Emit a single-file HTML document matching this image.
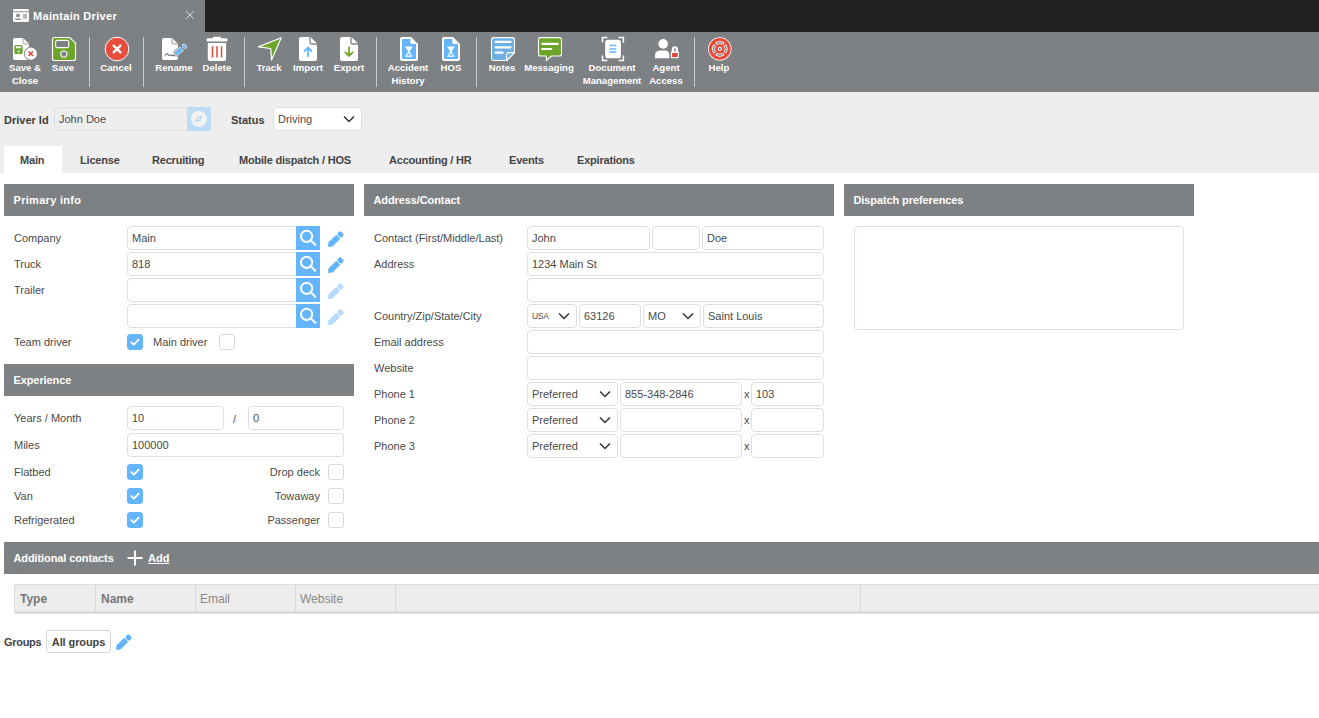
<!DOCTYPE html>
<html><head><meta charset="utf-8">
<style>
*{box-sizing:border-box;margin:0;padding:0}
html,body{width:1319px;height:718px;overflow:hidden;background:#fff;font-family:"Liberation Sans",sans-serif;font-size:11px;color:#444}
.a{position:absolute}
#titlebar{left:0;top:0;width:1319px;height:32px;background:#222}
#tab0{left:0;top:0;width:205px;height:32px;background:#7e8184}
#toolbar{left:0;top:32px;width:1319px;height:60px;background:#7e8184}
#topbg{left:0;top:92px;width:1319px;height:81px;background:#eee}
.sep{position:absolute;top:37px;width:1px;height:50px;background:#c9cbcd}
.tl{position:absolute;top:60.5px;color:#fff;font-weight:bold;font-size:9.6px;line-height:13px;text-align:center;white-space:nowrap;letter-spacing:0px}
.tl span{display:block}
.hdr{position:absolute;height:32px;background:#7e8184;color:#fff;font-weight:bold;font-size:11px;line-height:32px;padding-left:9.5px;letter-spacing:-0.1px}
.lbl{position:absolute;font-size:11px;line-height:14px;color:#4a4a4a;white-space:nowrap}
.inp{position:absolute;height:24px;border:1px solid #dcdee3;border-radius:4px;background:#fff;font-size:11px;line-height:22px;padding-left:4px;color:#4a4a4a;white-space:nowrap}
.srch{position:absolute;width:24px;height:24px;background:#64b5fb}
.cb{position:absolute;width:16px;height:16px;border-radius:3px;border:1px solid #d6d8dc;background:#fff}
.cb.on{background:#64b5fb;border-color:#64b5fb}
.tab{position:absolute;top:147px;height:27px;font-weight:bold;font-size:11px;line-height:27px;color:#444;white-space:nowrap;letter-spacing:-0.2px}
.sel svg{position:absolute;right:6px;top:7px}
</style></head>
<body>
<div class="a" id="titlebar"></div>
<div class="a" id="tab0"></div>
<div class="a" id="toolbar"></div>
<div class="a" id="topbg"></div>

<svg class="a" style="left:0;top:0" width="760" height="92" viewBox="0 0 760 92">
<!-- title id card -->
<rect x="13" y="9" width="16" height="13" rx="1.5" fill="#fff"/>
<rect x="13" y="11.3" width="16" height="0.9" fill="#7e8184"/>
<circle cx="18" cy="15.4" r="1.9" fill="#8a8c8f"/>
<rect x="15" y="18.6" width="6" height="1.4" rx="0.7" fill="#8a8c8f"/>
<rect x="23" y="14" width="4" height="4.7" fill="#b5b6b8"/>
<!-- close x -->
<path d="M186 11 L194 19 M194 11 L186 19" stroke="#d8d9da" stroke-width="1"/>
<!-- save & close -->
<path d="M15 38 H23 L29 44 V58 Q29 60 27 60 H15 Q13 60 13 58 V40 Q13 38 15 38 Z" fill="#fff"/>
<path d="M23 38 V43 Q23 44 24 44 H29" fill="#eee" stroke="#999" stroke-width="0.8"/>
<rect x="14.3" y="45" width="8.4" height="9" rx="1.6" fill="#6da52b"/>
<rect x="15.8" y="46.3" width="5.4" height="2" rx="0.6" fill="#fff"/>
<circle cx="18.5" cy="51.6" r="1" fill="#fff"/>
<circle cx="30.8" cy="53.7" r="6.9" fill="#7e8184"/>
<circle cx="30.8" cy="53.7" r="6.1" fill="#fff"/>
<path d="M28.6 51.5 L33 55.9 M33 51.5 L28.6 55.9" stroke="#e2483a" stroke-width="1.5"/>
<!-- save -->
<path d="M54.5 37.5 H69.8 L75.5 43.2 V58.5 Q75.5 60.5 73.5 60.5 H54.5 Q52.5 60.5 52.5 58.5 V39.5 Q52.5 37.5 54.5 37.5 Z" fill="#6da52b" stroke="#fff" stroke-width="1.2"/>
<rect x="55.6" y="40.4" width="13.2" height="7.2" rx="1.8" fill="#7e8184" stroke="#fff" stroke-width="1.1"/>
<circle cx="63.9" cy="54.1" r="3.1" fill="#7e8184" stroke="#fff" stroke-width="1.1"/>
<!-- cancel -->
<circle cx="117" cy="49" r="11.8" fill="#e74c3c" stroke="#fff" stroke-width="1"/>
<path d="M113.6 45.6 L120.4 52.4 M120.4 45.6 L113.6 52.4" stroke="#fff" stroke-width="2.3" stroke-linecap="round"/>
<!-- rename -->
<path d="M164 38 H172 L178 44 V58 Q178 60 176 60 H164 Q162 60 162 58 V40 Q162 38 164 38 Z" fill="#fff"/>
<path d="M172 38 V43 Q172 44 173 44 H178" fill="#eee" stroke="#888" stroke-width="0.8"/>
<path d="M165 56.2 Q166.3 53.2 167.6 53.6 Q168.6 56.4 170 55.2 Q171 54 172 55.6 L174.5 55.6" fill="none" stroke="#6d6f72" stroke-width="1.1"/>
<g transform="translate(174.4 55.2) rotate(-42)">
<path d="M-0.3 0.3 L2 -3 H10.6 V3 H2 Z" fill="#fff" stroke="#7e8184" stroke-width="0.9" stroke-linejoin="round"/>
<path d="M0.9 0 L2.6 -2 H10 V2 H2.6 Z" fill="#64b5fb"/>
<rect x="11.3" y="-3" width="4.3" height="6" rx="2.3" fill="#fff" stroke="#7e8184" stroke-width="0.6"/>
<rect x="12.1" y="-2" width="2.7" height="4" rx="1.3" fill="#64b5fb"/>
</g>
<!-- delete -->
<rect x="206.5" y="38.3" width="21" height="3.3" rx="1.5" fill="#fff"/>
<rect x="212.8" y="36.8" width="8.2" height="2.5" rx="1" fill="#fff"/>
<path d="M207.8 42.9 H226.1 V58.5 Q226.1 61 223.6 61 H210.3 Q207.8 61 207.8 58.5 Z" fill="#fff"/>
<path d="M212.5 46.3 V57.6 M217 46.3 V57.6 M221.5 46.3 V57.6" stroke="#e2483a" stroke-width="1.5"/>
<!-- track -->
<path d="M281.2 37.8 L258.5 46.9 L270.7 48.5 L271.6 60.1 Z" fill="#6da52b" stroke="#fff" stroke-width="1.2" stroke-linejoin="round"/>
<!-- import -->
<path d="M301 37 H310 L317 44 V59 Q317 61 315 61 H301 Q299 61 299 59 V39 Q299 37 301 37 Z" fill="#fff"/>
<path d="M310 36.5 V42.5 Q310 44 311.5 44 H317.5" fill="#fff" stroke="#7e8184" stroke-width="1.3"/>
<path d="M308 56 V47.8 M304.4 51.2 L308 47.6 L311.6 51.2" fill="none" stroke="#64b5fb" stroke-width="1.8" stroke-linecap="round"/>
<!-- export -->
<path d="M342 37 H351 L358 44 V59 Q358 61 356 61 H342 Q340 61 340 59 V39 Q340 37 342 37 Z" fill="#fff"/>
<path d="M351 36.5 V42.5 Q351 44 352.5 44 H358.5" fill="#fff" stroke="#7e8184" stroke-width="1.3"/>
<path d="M349 47.3 V56 M345.4 52.3 L349 55.9 L352.6 52.3" fill="none" stroke="#6da52b" stroke-width="1.8" stroke-linecap="round"/>
<!-- accident history -->
<path d="M402 37 H411 L418 44 V59 Q418 61 416 61 H402 Q400 61 400 59 V39 Q400 37 402 37 Z" fill="#fff"/>
<path d="M403 39 H410.4 V43 Q410.4 44 411.4 44 H416 V58 Q416 59 415 59 H403 Q402 59 402 58 V40 Q402 39 403 39 Z" fill="#64b5fb"/>
<path d="M404.9 46.5 H412.8 L409.5 51.6 L412.8 56.8 H404.9 L408.2 51.6 Z" fill="#fff"/>
<path d="M406.3 55.6 L408.85 53.2 L411.4 55.6 Z" fill="#64b5fb"/>
<!-- hos -->
<path d="M444 37 H453 L460 44 V59 Q460 61 458 61 H444 Q442 61 442 59 V39 Q442 37 444 37 Z" fill="#fff"/>
<path d="M445 39 H452.4 V43 Q452.4 44 453.4 44 H458 V58 Q458 59 457 59 H445 Q444 59 444 58 V40 Q444 39 445 39 Z" fill="#64b5fb"/>
<path d="M446.9 46.5 H454.8 L451.5 51.6 L454.8 56.8 H446.9 L450.2 51.6 Z" fill="#fff"/>
<path d="M448.3 55.6 L450.85 53.2 L453.4 55.6 Z" fill="#64b5fb"/>
<!-- notes -->
<path d="M494 37.6 H512 Q514.5 37.6 514.5 40.1 V52.6 L506.6 60.5 H494 Q491.5 60.5 491.5 58 V40.1 Q491.5 37.6 494 37.6 Z" fill="#6eafe4" stroke="#fff" stroke-width="1.1"/>
<path d="M506.6 60.5 V55 Q506.6 52.6 509 52.6 H514.5 Z" fill="#6eafe4" stroke="#fff" stroke-width="1.1" stroke-linejoin="round"/>
<path d="M495.6 41.9 H510.6 M495.6 47.3 H510.6 M495.6 52.7 H502.6" stroke="#fff" stroke-width="2.2" stroke-linecap="round"/>
<!-- messaging -->
<path d="M540.5 37.6 H559.5 Q561.5 37.6 561.5 39.6 V54 Q561.5 56 559.5 56 H551.5 L546.3 60.5 V56 H540.5 Q538.5 56 538.5 54 V39.6 Q538.5 37.6 540.5 37.6 Z" fill="#6da52b" stroke="#fff" stroke-width="1.1" stroke-linejoin="round"/>
<path d="M542.3 43.8 H557.8 M542.3 49 H551.2" stroke="#fff" stroke-width="2.2" stroke-linecap="round"/>
<!-- document management -->
<path d="M602.5 42.5 V37.6 H607.4 M618.6 37.6 H623.4 V42.5 M623.4 55.5 V60.4 H618.6 M607.4 60.4 H602.5 V55.5" fill="none" stroke="#fff" stroke-width="1.5"/>
<rect x="605.2" y="39.8" width="15.7" height="18.5" rx="2.6" fill="#fff"/>
<path d="M609.3 45.6 H616.3 M609.3 48.9 H616.3 M609.3 52.1 H616.3" stroke="#64b5fb" stroke-width="1.5"/>
<!-- agent access -->
<circle cx="663.2" cy="43.9" r="4.8" fill="#fff"/>
<path d="M655 58.3 V55.5 Q655 50.4 660.5 50.4 H665 Q669.3 50.4 669.3 55 V58.3 Z" fill="#fff"/>
<path d="M671.8 52.5 V49.6 Q671.8 46.3 674.9 46.3 Q678 46.3 678 49.6 V52.5 Z" fill="#fff"/>
<rect x="674.1" y="48.3" width="1.6" height="3.5" rx="0.8" fill="#7e8184"/>
<rect x="670.9" y="51.6" width="8" height="6.7" rx="1" fill="#fff"/>
<rect x="672.1" y="52.9" width="5.6" height="4.1" fill="#e2483a"/>
<!-- help -->
<circle cx="719.8" cy="48.9" r="11.7" fill="#fff"/>
<circle cx="719.8" cy="48.9" r="10.9" fill="#e84a3a"/>
<path d="M726.02 44.71 A7.5 7.5 0 0 1 726.02 53.09 L724.19 51.86 A5.3 5.3 0 0 0 724.19 45.94 Z" fill="#7e8184" stroke="#fff" stroke-width="0.9" stroke-linejoin="round"/>
<path d="M723.99 55.12 A7.5 7.5 0 0 1 715.61 55.12 L716.84 53.29 A5.3 5.3 0 0 0 722.76 53.29 Z" fill="#7e8184" stroke="#fff" stroke-width="0.9" stroke-linejoin="round"/>
<path d="M713.58 53.09 A7.5 7.5 0 0 1 713.58 44.71 L715.41 45.94 A5.3 5.3 0 0 0 715.41 51.86 Z" fill="#7e8184" stroke="#fff" stroke-width="0.9" stroke-linejoin="round"/>
<path d="M715.61 42.68 A7.5 7.5 0 0 1 723.99 42.68 L722.76 44.51 A5.3 5.3 0 0 0 716.84 44.51 Z" fill="#7e8184" stroke="#fff" stroke-width="0.9" stroke-linejoin="round"/>
<circle cx="719.8" cy="48.9" r="2.1" fill="#fff"/>
<circle cx="719.8" cy="48.9" r="1.1" fill="#7e8184"/>
</svg>
<!-- title -->
<div class="a" style="left:33px;top:9px;color:#fff;font-weight:bold;font-size:11px;line-height:14px;letter-spacing:0.3px">Maintain Driver</div>

<!-- separators -->
<div class="sep" style="left:89px"></div>
<div class="sep" style="left:143px"></div>
<div class="sep" style="left:244px"></div>
<div class="sep" style="left:376px"></div>
<div class="sep" style="left:476px"></div>
<div class="sep" style="left:694px"></div>

<!-- toolbar labels -->
<div class="tl" style="left:5px;width:40px"><span>Save &amp;</span><span>Close</span></div>
<div class="tl" style="left:43px;width:40px">Save</div>
<div class="tl" style="left:96px;width:40px">Cancel</div>
<div class="tl" style="left:152px;width:44px">Rename</div>
<div class="tl" style="left:197px;width:40px">Delete</div>
<div class="tl" style="left:249px;width:40px">Track</div>
<div class="tl" style="left:288px;width:40px">Import</div>
<div class="tl" style="left:329px;width:40px">Export</div>
<div class="tl" style="left:383px;width:50px"><span>Accident</span><span>History</span></div>
<div class="tl" style="left:431px;width:40px">HOS</div>
<div class="tl" style="left:482px;width:40px">Notes</div>
<div class="tl" style="left:522px;width:54px">Messaging</div>
<div class="tl" style="left:577px;width:70px"><span>Document</span><span>Management</span></div>
<div class="tl" style="left:641px;width:50px"><span>Agent</span><span>Access</span></div>
<div class="tl" style="left:699px;width:40px">Help</div>

<!-- driver id row -->
<div class="lbl" style="left:4px;top:113px;font-weight:bold;color:#3d3d3d">Driver Id</div>
<div class="inp" style="left:54px;top:107px;width:157px;height:24px;background:#eeeeee;border-color:#dde0e5">John Doe</div>
<div class="a" style="left:187px;top:107px;width:24px;height:24px;background:#bcdcf6"></div>
<svg class="a" style="left:187px;top:107px" width="24" height="24" viewBox="0 0 24 24"><circle cx="12" cy="12" r="8" fill="#f2f2f2"/><path d="M15.9 8.2 L13.4 13.6 L7.6 15.7 L10.1 10.3 Z" fill="#bcdcf5"/><rect x="10.9" y="11.1" width="1.8" height="1.8" fill="#f2f2f2"/></svg>
<div class="lbl" style="left:231px;top:113px;font-weight:bold;color:#3d3d3d">Status</div>
<div class="inp sel" style="left:273px;top:107px;width:89px;height:24px">Driving<svg width="12" height="8" viewBox="0 0 12 8"><path d="M1 1.5 L6 6.5 L11 1.5" fill="none" stroke="#333" stroke-width="1.5"/></svg></div>

<!-- tabs -->
<div class="a" style="left:4px;top:146px;width:58px;height:27px;background:#fff"></div>
<div class="tab" style="left:20px">Main</div>
<div class="tab" style="left:80px">License</div>
<div class="tab" style="left:152px">Recruiting</div>
<div class="tab" style="left:239px">Mobile dispatch / HOS</div>
<div class="tab" style="left:389px">Accounting / HR</div>
<div class="tab" style="left:509px">Events</div>
<div class="tab" style="left:577px">Expirations</div>

<!-- headers -->
<div class="hdr" style="left:4px;top:184px;width:350px;letter-spacing:0.3px">Primary info</div>
<div class="hdr" style="left:364px;top:184px;width:470px">Address/Contact</div>
<div class="hdr" style="left:844px;top:184px;width:350px">Dispatch preferences</div>
<div class="hdr" style="left:4px;top:364px;width:350px">Experience</div>
<div class="hdr" style="left:4px;top:542px;width:1315px">Additional contacts</div>

<!-- primary info -->
<div class="lbl" style="left:14px;top:231px">Company</div>
<div class="inp" style="left:127px;top:226px;width:180px;height:24px">Main</div>
<div class="srch" style="left:296px;top:226px"><svg width="24" height="24" viewBox="0 0 24 24"><circle cx="10.6" cy="10.3" r="5.6" fill="none" stroke="#fff" stroke-width="2"/><path d="M14.7 14.3 L19.3 18.7" stroke="#fff" stroke-width="2" stroke-linecap="round"/></svg></div>
<svg class="a" style="left:324px;top:226px" width="24" height="24" viewBox="0 0 24 24"><g transform="translate(4.2 20.8) rotate(-45)" fill="#62b2f6" stroke="#62b2f6" stroke-linejoin="round"><path d="M0.4 0 L3.6 -2.55 H13.9 V2.55 H3.6 Z" stroke-width="0.8"/><rect x="15.1" y="-2.7" width="4.6" height="5.4" rx="2.3" stroke-width="0.8"/></g></svg>
<div class="lbl" style="left:14px;top:257px">Truck</div>
<div class="inp" style="left:127px;top:252px;width:180px;height:24px">818</div>
<div class="srch" style="left:296px;top:252px"><svg width="24" height="24" viewBox="0 0 24 24"><circle cx="10.6" cy="10.3" r="5.6" fill="none" stroke="#fff" stroke-width="2"/><path d="M14.7 14.3 L19.3 18.7" stroke="#fff" stroke-width="2" stroke-linecap="round"/></svg></div>
<svg class="a" style="left:324px;top:252px" width="24" height="24" viewBox="0 0 24 24"><g transform="translate(4.2 20.8) rotate(-45)" fill="#62b2f6" stroke="#62b2f6" stroke-linejoin="round"><path d="M0.4 0 L3.6 -2.55 H13.9 V2.55 H3.6 Z" stroke-width="0.8"/><rect x="15.1" y="-2.7" width="4.6" height="5.4" rx="2.3" stroke-width="0.8"/></g></svg>
<div class="lbl" style="left:14px;top:283px">Trailer</div>
<div class="inp" style="left:127px;top:278px;width:180px;height:24px"></div>
<div class="srch" style="left:296px;top:278px"><svg width="24" height="24" viewBox="0 0 24 24"><circle cx="10.6" cy="10.3" r="5.6" fill="none" stroke="#fff" stroke-width="2"/><path d="M14.7 14.3 L19.3 18.7" stroke="#fff" stroke-width="2" stroke-linecap="round"/></svg></div>
<svg class="a" style="left:324px;top:278px" width="24" height="24" viewBox="0 0 24 24"><g transform="translate(4.2 20.8) rotate(-45)" fill="#b5dafb" stroke="#b5dafb" stroke-linejoin="round"><path d="M0.4 0 L3.6 -2.55 H13.9 V2.55 H3.6 Z" stroke-width="0.8"/><rect x="15.1" y="-2.7" width="4.6" height="5.4" rx="2.3" stroke-width="0.8"/></g></svg>
<div class="inp" style="left:127px;top:304px;width:180px;height:24px"></div>
<div class="srch" style="left:296px;top:304px"><svg width="24" height="24" viewBox="0 0 24 24"><circle cx="10.6" cy="10.3" r="5.6" fill="none" stroke="#fff" stroke-width="2"/><path d="M14.7 14.3 L19.3 18.7" stroke="#fff" stroke-width="2" stroke-linecap="round"/></svg></div>
<svg class="a" style="left:324px;top:304px" width="24" height="24" viewBox="0 0 24 24"><g transform="translate(4.2 20.8) rotate(-45)" fill="#b5dafb" stroke="#b5dafb" stroke-linejoin="round"><path d="M0.4 0 L3.6 -2.55 H13.9 V2.55 H3.6 Z" stroke-width="0.8"/><rect x="15.1" y="-2.7" width="4.6" height="5.4" rx="2.3" stroke-width="0.8"/></g></svg>
<div class="lbl" style="left:14px;top:335px">Team driver</div>
<div class="cb on" style="left:127px;top:334px"><svg width="16" height="16" viewBox="0 0 16 16" style="position:absolute;left:-1px;top:-1px"><path d="M4.3 8.2 L6.8 10.6 L11.6 5.6" fill="none" stroke="#fff" stroke-width="1.8" stroke-linecap="round" stroke-linejoin="round"/></svg></div>
<div class="lbl" style="left:153px;top:335px">Main driver</div>
<div class="cb" style="left:219px;top:334px"></div>
<!-- experience -->
<div class="lbl" style="left:14px;top:411px">Years / Month</div>
<div class="inp" style="left:127px;top:406px;width:97px;height:24px">10</div>
<div class="lbl" style="left:233px;top:412px">/</div>
<div class="inp" style="left:248px;top:406px;width:96px;height:24px">0</div>
<div class="lbl" style="left:14px;top:438px">Miles</div>
<div class="inp" style="left:127px;top:433px;width:217px;height:24px">100000</div>
<div class="lbl" style="left:14px;top:465px">Flatbed</div>
<div class="cb on" style="left:127px;top:464px"><svg width="16" height="16" viewBox="0 0 16 16" style="position:absolute;left:-1px;top:-1px"><path d="M4.3 8.2 L6.8 10.6 L11.6 5.6" fill="none" stroke="#fff" stroke-width="1.8" stroke-linecap="round" stroke-linejoin="round"/></svg></div>
<div class="lbl" style="right:999px;top:465px">Drop deck</div>
<div class="cb" style="left:328px;top:464px"></div>
<div class="lbl" style="left:14px;top:489px">Van</div>
<div class="cb on" style="left:127px;top:488px"><svg width="16" height="16" viewBox="0 0 16 16" style="position:absolute;left:-1px;top:-1px"><path d="M4.3 8.2 L6.8 10.6 L11.6 5.6" fill="none" stroke="#fff" stroke-width="1.8" stroke-linecap="round" stroke-linejoin="round"/></svg></div>
<div class="lbl" style="right:999px;top:489px">Towaway</div>
<div class="cb" style="left:328px;top:488px"></div>
<div class="lbl" style="left:14px;top:513px">Refrigerated</div>
<div class="cb on" style="left:127px;top:512px"><svg width="16" height="16" viewBox="0 0 16 16" style="position:absolute;left:-1px;top:-1px"><path d="M4.3 8.2 L6.8 10.6 L11.6 5.6" fill="none" stroke="#fff" stroke-width="1.8" stroke-linecap="round" stroke-linejoin="round"/></svg></div>
<div class="lbl" style="right:999px;top:513px">Passenger</div>
<div class="cb" style="left:328px;top:512px"></div>
<!-- address -->
<div class="lbl" style="left:374px;top:231px">Contact (First/Middle/Last)</div>
<div class="inp" style="left:527px;top:226px;width:123px;height:24px">John</div>
<div class="inp" style="left:652px;top:226px;width:48px;height:24px"></div>
<div class="inp" style="left:702px;top:226px;width:122px;height:24px">Doe</div>
<div class="lbl" style="left:374px;top:257px">Address</div>
<div class="inp" style="left:527px;top:252px;width:297px;height:24px">1234 Main St</div>
<div class="inp" style="left:527px;top:278px;width:297px;height:24px"></div>
<div class="lbl" style="left:374px;top:309px">Country/Zip/State/City</div>
<div class="inp sel" style="left:527px;top:304px;width:50px"><span style="font-size:8.5px;letter-spacing:-0.3px;position:relative;top:-1px">USA</span><svg width="12" height="8" viewBox="0 0 12 8"><path d="M1 1.5 L6 6.5 L11 1.5" fill="none" stroke="#333" stroke-width="1.5"/></svg></div>
<div class="inp" style="left:579px;top:304px;width:62px;height:24px">63126</div>
<div class="inp sel" style="left:643px;top:304px;width:58px">MO<svg width="12" height="8" viewBox="0 0 12 8"><path d="M1 1.5 L6 6.5 L11 1.5" fill="none" stroke="#333" stroke-width="1.5"/></svg></div>
<div class="inp" style="left:703px;top:304px;width:121px;height:24px">Saint Louis</div>
<div class="lbl" style="left:374px;top:335px">Email address</div>
<div class="inp" style="left:527px;top:330px;width:297px;height:24px"></div>
<div class="lbl" style="left:374px;top:361px">Website</div>
<div class="inp" style="left:527px;top:356px;width:297px;height:24px"></div>
<div class="lbl" style="left:374px;top:387px">Phone 1</div>
<div class="inp sel" style="left:527px;top:382px;width:91px">Preferred<svg width="12" height="8" viewBox="0 0 12 8"><path d="M1 1.5 L6 6.5 L11 1.5" fill="none" stroke="#333" stroke-width="1.5"/></svg></div>
<div class="inp" style="left:620px;top:382px;width:122px;height:24px">855-348-2846</div>
<div class="lbl" style="left:744px;top:387px">x</div>
<div class="inp" style="left:751px;top:382px;width:73px;height:24px">103</div>
<div class="lbl" style="left:374px;top:413px">Phone 2</div>
<div class="inp sel" style="left:527px;top:408px;width:91px">Preferred<svg width="12" height="8" viewBox="0 0 12 8"><path d="M1 1.5 L6 6.5 L11 1.5" fill="none" stroke="#333" stroke-width="1.5"/></svg></div>
<div class="inp" style="left:620px;top:408px;width:122px;height:24px"></div>
<div class="lbl" style="left:744px;top:413px">x</div>
<div class="inp" style="left:751px;top:408px;width:73px;height:24px"></div>
<div class="lbl" style="left:374px;top:439px">Phone 3</div>
<div class="inp sel" style="left:527px;top:434px;width:91px">Preferred<svg width="12" height="8" viewBox="0 0 12 8"><path d="M1 1.5 L6 6.5 L11 1.5" fill="none" stroke="#333" stroke-width="1.5"/></svg></div>
<div class="inp" style="left:620px;top:434px;width:122px;height:24px"></div>
<div class="lbl" style="left:744px;top:439px">x</div>
<div class="inp" style="left:751px;top:434px;width:73px;height:24px"></div>
<!-- dispatch -->
<div class="a" style="left:854px;top:226px;width:330px;height:104px;border:1px solid #dcdee3;border-radius:4px"></div>
<!-- additional contacts -->
<svg class="a" style="left:127px;top:550px" width="16" height="16" viewBox="0 0 16 16"><path d="M8 0.5 V15.5 M0.5 8 H15.5" stroke="#fff" stroke-width="2"/></svg>
<div class="a" style="left:148px;top:551px;color:#fff;font-weight:bold;font-size:11px;line-height:14px;text-decoration:underline">Add</div>
<div class="a" style="left:14px;top:584px;width:1305px;height:30px;background:#ededed;border-top:1px solid #dcdcdc;border-left:1px solid #dcdcdc;border-bottom:3px solid #dcdcdc"></div>
<div class="a" style="left:95px;top:585px;width:1px;height:26px;background:#d9d9d9"></div>
<div class="a" style="left:195px;top:585px;width:1px;height:26px;background:#d9d9d9"></div>
<div class="a" style="left:295px;top:585px;width:1px;height:26px;background:#d9d9d9"></div>
<div class="a" style="left:395px;top:585px;width:1px;height:26px;background:#d9d9d9"></div>
<div class="a" style="left:860px;top:585px;width:1px;height:26px;background:#d9d9d9"></div>
<div class="lbl" style="left:20px;top:592px;font-weight:bold;color:#777;font-size:12px">Type</div>
<div class="lbl" style="left:101px;top:592px;font-weight:bold;color:#777;font-size:12px">Name</div>
<div class="lbl" style="left:200px;top:592px;color:#888;font-size:12px">Email</div>
<div class="lbl" style="left:300px;top:592px;color:#888;font-size:12px">Website</div>
<!-- groups -->
<div class="lbl" style="left:4px;top:635px;font-weight:bold;color:#444;letter-spacing:-0.3px">Groups</div>
<div class="a" style="left:46px;top:630px;width:65px;height:23px;border:1px solid #d6d6d6;border-radius:3px;font-weight:bold;color:#444;font-size:11px;line-height:22px;text-align:center;letter-spacing:-0.1px">All groups</div>
<svg class="a" style="left:112px;top:629px" width="24" height="24" viewBox="0 0 24 24"><g transform="translate(4.2 20.8) rotate(-45)" fill="#62b2f6" stroke="#62b2f6" stroke-linejoin="round"><path d="M0.4 0 L3.6 -2.55 H13.9 V2.55 H3.6 Z" stroke-width="0.8"/><rect x="15.1" y="-2.7" width="4.6" height="5.4" rx="2.3" stroke-width="0.8"/></g></svg>
</body></html>
